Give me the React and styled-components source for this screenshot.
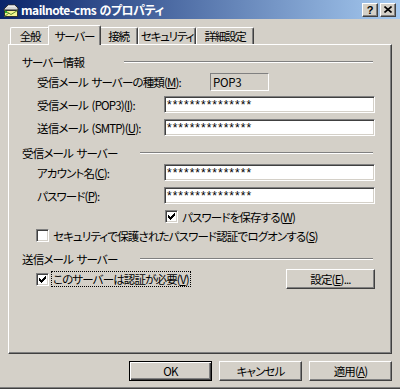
import React from "react";
import styled, { createGlobalStyle } from "styled-components";

const FONT = `"Noto Sans CJK JP", "Noto Sans CJK SC", sans-serif`;

const GlobalStyle = createGlobalStyle`
  html, body { margin: 0; padding: 0; background: #d4d0c8; }
  body { font-family: ${FONT}; font-size: 12px; color: #000; }
`;

const Window = styled.div`
  width: 400px;
  height: 389px;
  box-sizing: border-box;
  background: #d4d0c8;
  display: flex;
  flex-direction: column;
  overflow: hidden;
  border-bottom: 1px solid #404040;
  box-shadow: inset 0 -1px #808080;
  font-family: ${FONT};
  font-size: 11.5px;
  letter-spacing: -0.85px;
  word-spacing: 2px;
  line-height: 14px;
  font-feature-settings: "palt";
  color: #000;
`;

const TitleBar = styled.div`
  height: 19px;
  flex: none;
  display: flex;
  align-items: center;
  background: linear-gradient(to right, #0a246a, #a6caf0);
  padding: 0 4px 0 3px;
`;

const TitleText = styled.div`
  flex: 1;
  margin-left: 2px;
  color: #fff;
  font-size: 12px;
  letter-spacing: -0.5px;
  word-spacing: 1px;
  font-weight: bold;
  white-space: nowrap;
`;

const CaptionButton = styled.div`
  width: 16px;
  height: 14px;
  box-sizing: border-box;
  margin-left: ${(p) => p.$gap || 0}px;
  background: #d4d0c8;
  border: 1px solid;
  border-color: #fff #404040 #404040 #fff;
  box-shadow: inset -1px -1px #808080;
  display: flex;
  align-items: center;
  justify-content: center;
  font: bold 11px "Liberation Sans", sans-serif;
  letter-spacing: 0;
  line-height: 12px;
`;

const Body = styled.div`
  flex: 1;
  display: flex;
  flex-direction: column;
  padding: 6px 8px 0 8px;
`;

const TabStrip = styled.div`
  height: 19px;
  display: flex;
  align-items: flex-end;
  padding-left: 2px;
`;

const Tab = styled.div`
  box-sizing: border-box;
  width: ${(p) => p.$w}px;
  height: ${(p) => (p.$active ? 20 : 17)}px;
  margin: 0 ${(p) => (p.$active ? -2 : 0)}px ${(p) => (p.$active ? -1 : 0)}px;
  padding-top: ${(p) => (p.$active ? 3 : 1)}px;
  position: relative;
  z-index: ${(p) => (p.$active ? 2 : 1)};
  background: #d4d0c8;
  border-top: 1px solid #fff;
  border-left: 1px solid #fff;
  border-right: 1px solid #404040;
  box-shadow: inset -1px 0 #808080;
  border-radius: 2px 2px 0 0;
  text-align: center;
  letter-spacing: -1.2px;
  white-space: nowrap;
`;

const Panel = styled.div`
  box-sizing: border-box;
  height: 310px;
  border: 1px solid;
  border-color: #fff #404040 #404040 #fff;
  box-shadow: inset -1px -1px #808080;
  padding: 0 16px 0 13px;
  display: flex;
  flex-direction: column;
`;

const GroupHeader = styled.div`
  display: flex;
  align-items: center;
  height: 14px;
  margin-top: ${(p) => p.$mt}px;
`;

const GroupTitle = styled.div`
  width: ${(p) => p.$w}px;
  flex: none;
  white-space: nowrap;
`;

const Etched = styled.div`
  flex: 1;
  height: 0;
  border-top: 1px solid #808080;
  border-bottom: 1px solid #fff;
  margin-right: 2px;
`;

const Row = styled.div`
  display: flex;
  align-items: center;
  height: ${(p) => p.$h}px;
  margin-top: ${(p) => p.$mt}px;
  padding-left: ${(p) => p.$indent ?? 15}px;
`;

const Label = styled.div`
  width: 127px;
  flex: none;
  white-space: nowrap;
`;

const Key = styled.span`
  text-decoration: underline;
  text-underline-offset: 1px;
`;

const Field = styled.div`
  box-sizing: border-box;
  width: 211px;
  height: 17px;
  background: #fff;
  border: 1px solid;
  border-color: #808080 #fff #fff #808080;
  box-shadow: inset 1px 1px #404040, inset -1px -1px #d4d0c8;
  padding-left: 2px;
  display: flex;
  align-items: center;
  font: 12px "Liberation Sans", sans-serif;
  letter-spacing: 1px;
  overflow: hidden;
`;

const StaticBox = styled.div`
  box-sizing: border-box;
  width: 59px;
  height: 18px;
  margin-left: 46px;
  border: 1px solid;
  border-color: #808080 #fff #fff #808080;
  padding-left: 2px;
  display: flex;
  align-items: center;
  letter-spacing: -0.3px;
`;

const CheckBox = styled.div`
  box-sizing: border-box;
  width: 13px;
  height: 13px;
  flex: none;
  background: #fff;
  border: 1px solid;
  border-color: #808080 #fff #fff #808080;
  box-shadow: inset 1px 1px #404040, inset -1px -1px #d4d0c8;
  display: flex;
  align-items: center;
  justify-content: center;
`;

const CheckLabel = styled.span`
  margin-left: 2px;
  padding: 0 1px;
  border: 1px ${(p) => (p.$focus ? "dotted #000" : "solid transparent")};
  white-space: nowrap;
`;

const Button = styled.div`
  box-sizing: border-box;
  width: ${(p) => p.$w}px;
  height: 20px;
  margin-left: ${(p) => (p.$push ? "auto" : "0")};
  background: #d4d0c8;
  border: 1px solid;
  border-color: ${(p) => (p.$default ? "#000" : "#fff #404040 #404040 #fff")};
  box-shadow: ${(p) =>
    p.$default
      ? "inset 1px 1px #fff, inset -1px -1px #404040, inset -2px -2px #808080"
      : "inset -1px -1px #808080"};
  display: flex;
  align-items: center;
  justify-content: center;
  white-space: nowrap;
`;

const ButtonRow = styled.div`
  display: flex;
  justify-content: flex-end;
  gap: 7px;
  margin-top: 7px;
`;

const Check = () => (
  <svg width="7" height="7" viewBox="0 0 7 7" shapeRendering="crispEdges">
    <polygon points="0,2 2,4 6,0 7,0 7,3 2,7 0,5" fill="#000" />
  </svg>
);

const CheckItem = ({ checked, focus, children }) => (
  <>
    <CheckBox>{checked && <Check />}</CheckBox>
    <CheckLabel $focus={focus}>{children}</CheckLabel>
  </>
);

const AppIcon = () => (
  <svg width="16" height="16" viewBox="0 0 16 16">
    <polygon points="1,7 5,3 12,3 15,6 15,8 1,8" fill="#d8d8d8" stroke="#303030" strokeWidth="1" />
    <line x1="5" y1="4" x2="12" y2="4" stroke="#fff" />
    <rect x="1.5" y="8.5" width="13" height="6" fill="#f4f490" stroke="#303030" />
    <polyline points="1.5,8.5 8,12.5 14.5,8.5" fill="none" stroke="#5a8a30" />
    <polyline points="1.5,14.5 6,11 M10,11 14.5,14.5" fill="none" stroke="#5a8a30" />
    <rect x="2" y="9" width="2" height="2" fill="#30b030" />
  </svg>
);

const CloseGlyph = () => (
  <svg width="8" height="7" viewBox="0 0 8 7">
    <path d="M0.5 0.5 L7.5 6.5 M7.5 0.5 L0.5 6.5" stroke="#000" strokeWidth="1.6" />
  </svg>
);

const STARS = "***************";

export default function App() {
  return (
    <>
      <GlobalStyle />
      <Window>
        <TitleBar>
          <AppIcon />
          <TitleText>mailnote-cms のプロパティ</TitleText>
          <CaptionButton>?</CaptionButton>
          <CaptionButton $gap={2}>
            <CloseGlyph />
          </CaptionButton>
        </TitleBar>
        <Body>
          <TabStrip>
            <Tab $w={40}>全般</Tab>
            <Tab $w={53} $active>
              サーバー
            </Tab>
            <Tab $w={39}>接続</Tab>
            <Tab $w={58}>セキュリティ</Tab>
            <Tab $w={58}>詳細設定</Tab>
          </TabStrip>
          <Panel>
            <GroupHeader $mt={10}>
              <GroupTitle $w={102}>サーバー情報</GroupTitle>
              <Etched />
            </GroupHeader>
            <Row $h={19} $mt={3}>
              <Label>
                受信メール サーバーの種類(<Key>M</Key>):
              </Label>
              <StaticBox>POP3</StaticBox>
            </Row>
            <Row $h={17} $mt={5}>
              <Label>
                受信メール (POP3)(<Key>I</Key>):
              </Label>
              <Field>{STARS}</Field>
            </Row>
            <Row $h={17} $mt={6}>
              <Label>
                送信メール (SMTP)(<Key>U</Key>):
              </Label>
              <Field>{STARS}</Field>
            </Row>

            <GroupHeader $mt={10}>
              <GroupTitle $w={118}>受信メール サーバー</GroupTitle>
              <Etched />
            </GroupHeader>
            <Row $h={17} $mt={4}>
              <Label>
                アカウント名(<Key>C</Key>):
              </Label>
              <Field>{STARS}</Field>
            </Row>
            <Row $h={17} $mt={6}>
              <Label>
                パスワード(<Key>P</Key>):
              </Label>
              <Field>{STARS}</Field>
            </Row>
            <Row $h={13} $mt={6} $indent={143}>
              <CheckItem checked>
                パスワードを保存する(<Key>W</Key>)
              </CheckItem>
            </Row>
            <Row $h={13} $mt={6} $indent={14}>
              <CheckItem>
                セキュリティで保護されたパスワード認証でログオンする(<Key>S</Key>)
              </CheckItem>
            </Row>

            <GroupHeader $mt={10}>
              <GroupTitle $w={118}>送信メール サーバー</GroupTitle>
              <Etched />
            </GroupHeader>
            <Row $h={20} $mt={3} $indent={14}>
              <CheckItem checked focus>
                このサーバーは認証が必要(<Key>V</Key>)
              </CheckItem>
              <Button $w={89} $push>
                設定(<Key>E</Key>)...
              </Button>
            </Row>
          </Panel>
          <ButtonRow>
            <Button $w={83} $default>
              OK
            </Button>
            <Button $w={83}>キャンセル</Button>
            <Button $w={83}>
              適用(<Key>A</Key>)
            </Button>
          </ButtonRow>
        </Body>
      </Window>
    </>
  );
}
